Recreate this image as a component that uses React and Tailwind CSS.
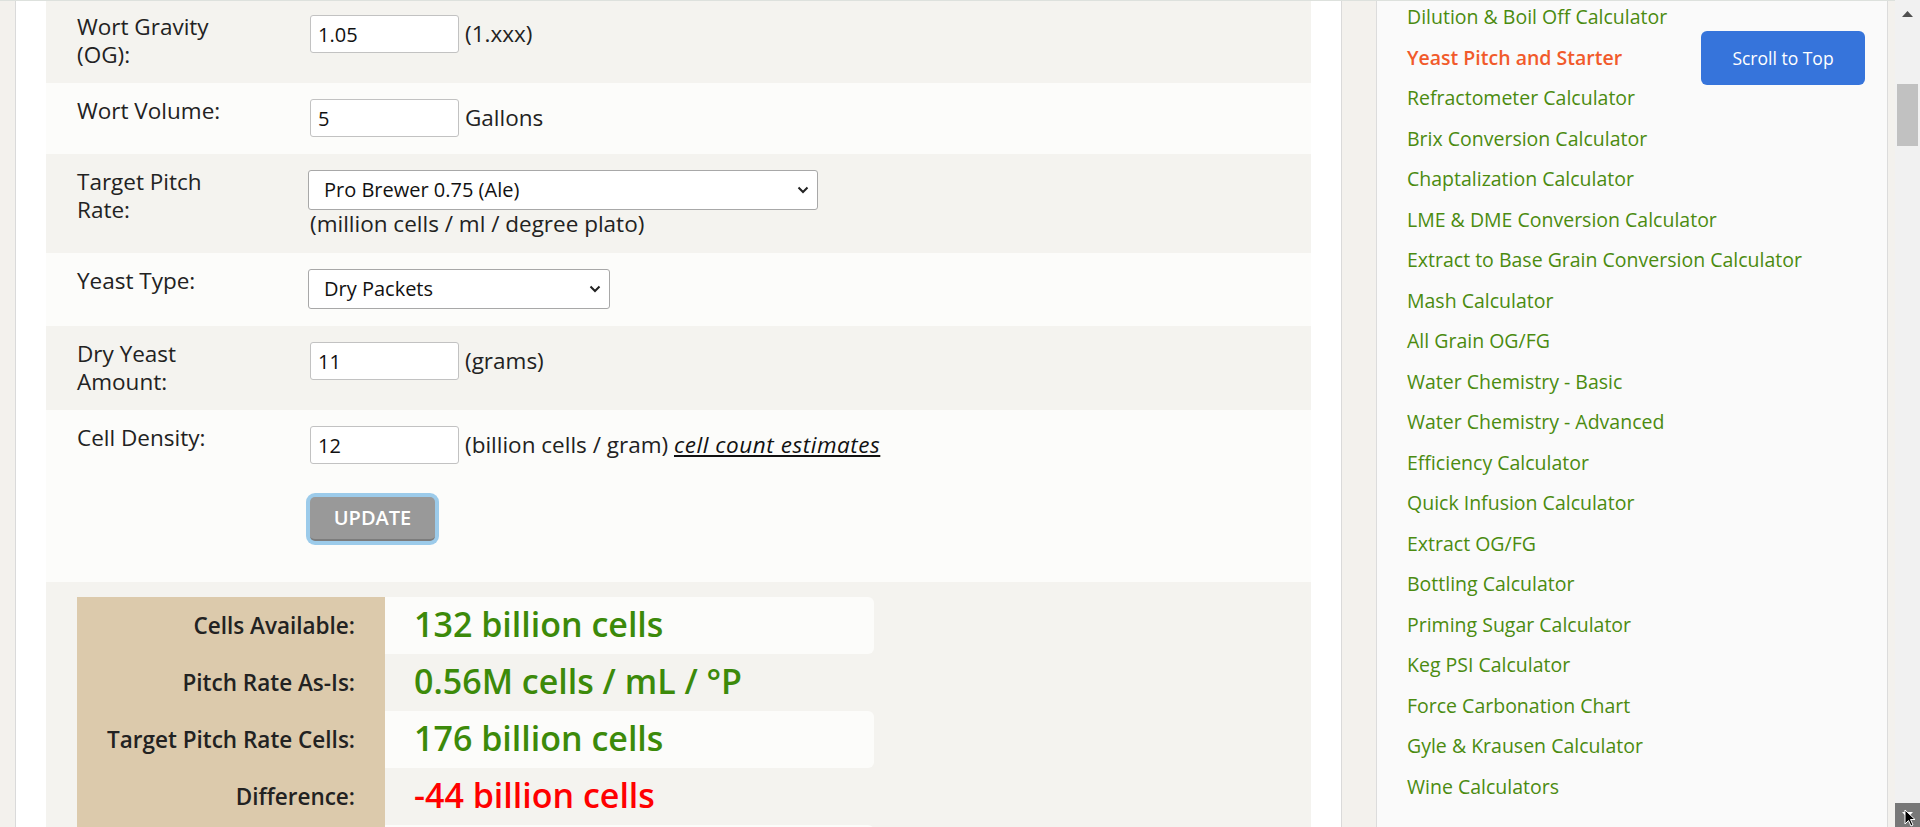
import React from 'react';

// Yeast pitch calculator page, scrolled down a bit.
const sidebarLinks = [
  'Dilution & Boil Off Calculator',
  'Yeast Pitch and Starter',
  'Refractometer Calculator',
  'Brix Conversion Calculator',
  'Chaptalization Calculator',
  'LME & DME Conversion Calculator',
  'Extract to Base Grain Conversion Calculator',
  'Mash Calculator',
  'All Grain OG/FG',
  'Water Chemistry - Basic',
  'Water Chemistry - Advanced',
  'Efficiency Calculator',
  'Quick Infusion Calculator',
  'Extract OG/FG',
  'Bottling Calculator',
  'Priming Sugar Calculator',
  'Keg PSI Calculator',
  'Force Carbonation Chart',
  'Gyle & Krausen Calculator',
  'Wine Calculators',
];

// last row only peeks in at the bottom edge
const results = [
  { label: 'Cells Available:', value: '132 billion cells', light: true },
  { label: 'Pitch Rate As-Is:', value: '0.56M cells / mL / °P' },
  { label: 'Target Pitch Rate Cells:', value: '176 billion cells', light: true },
  { label: 'Difference:', value: '-44 billion cells', bad: true },
  { label: '', value: '', light: true },
];

function Chevron() {
  return (
    <svg width="12" height="8" viewBox="0 0 12 8" className="pointer-events-none absolute right-[9px] top-1/2 -translate-y-1/2">
      <polyline points="1.5,1.5 6,6 10.5,1.5" fill="none" stroke="#222" strokeWidth="2" />
    </svg>
  );
}

function Select({ width, value }) {
  return (
    <div className={`relative -ml-[2px] ${width}`}>
      <select
        defaultValue={value}
        className="h-[40px] w-full appearance-none rounded-[3px] border border-[#a8a8a8] bg-white pl-[15px] text-[20px] text-[#111] font-['Open_Sans',sans-serif] outline-none"
      >
        <option>{value}</option>
      </select>
      <Chevron />
    </div>
  );
}

function Field({ value }) {
  return (
    <input
      defaultValue={value}
      className="h-[38px] w-[149px] rounded-[3px] border border-[#c2c2c2] bg-white px-[7px] text-[20px] text-[#111] font-['Open_Sans',sans-serif] outline-none"
    />
  );
}

function Row({ label, shade, children }) {
  return (
    <div className={`flex px-[31px] pt-4 pb-[17px] ${shade ? 'bg-[#f4f3ef]' : 'bg-[#fcfcfa]'}`}>
      <div className="w-[233px] shrink-0 -mt-[2px] -mb-[3px] text-[22.5px] leading-[28px] text-[#222]">{label}</div>
      <div className="flex-1">{children}</div>
    </div>
  );
}

function Unit({ children }) {
  return <span className="ml-[6px] text-[22.5px] leading-[28px] text-[#222]">{children}</span>;
}

export default function App() {
  return (
    <div className="flex h-[827px] w-[1920px] overflow-hidden bg-[#f3f1ed] font-['Open_Sans',sans-serif]">
      <div className="relative flex w-[1895px] flex-col">
        <div className="h-px w-full bg-[#dde1dd]" />
        <div className="flex min-h-0 flex-1">
          {/* main calculator panel */}
          <div className="ml-[15px] w-[1327px] overflow-hidden border-x border-[#dadada] bg-white px-[30px]">
            <div className="-mt-[2px]">
              <Row label={<>Wort Gravity<br />(OG):</>} shade>
                <div className="flex items-center">
                  <Field value="1.05" />
                  <Unit>(1.xxx)</Unit>
                </div>
              </Row>
              <Row label="Wort Volume:">
                <div className="flex items-center">
                  <Field value="5" />
                  <Unit>Gallons</Unit>
                </div>
              </Row>
              <Row label={<>Target Pitch<br />Rate:</>} shade>
                <Select width="w-[510px]" value="Pro Brewer 0.75 (Ale)" />
                <div className="-mb-[2px] text-[22.5px] leading-[28px] text-[#222]">(million cells / ml / degree plato)</div>
              </Row>
              <Row label="Yeast Type:">
                <Select width="w-[302px]" value="Dry Packets" />
              </Row>
              <Row label={<>Dry Yeast<br />Amount:</>} shade>
                <div className="flex items-center">
                  <Field value="11" />
                  <Unit>(grams)</Unit>
                </div>
              </Row>
              <Row label="Cell Density:">
                <div className="flex items-center">
                  <Field value="12" />
                  <Unit>
                    (billion cells / gram){' '}
                    <a className="italic underline tracking-[0.55px] text-[#111]">cell count estimates</a>
                  </Unit>
                </div>
                <button className="mt-[33px] mb-[24px] h-[44px] w-[125px] rounded-[5px] border-b-2 border-[#7c7c7c] bg-[#999999] text-[20px] font-semibold text-white ring-4 ring-[#9ccbea]">
                  UPDATE
                </button>
              </Row>

              {/* results */}
              <div className="bg-[#f4f3ef] px-[31px] pt-[15px] pb-10">
                {results.map((r, i) => (
                  <div key={i} className="flex h-[57px] w-[797px]">
                    <div className="flex w-[308px] items-center justify-end bg-[#dccaac] pr-[30px] text-[22.5px] font-semibold text-[#222]">
                      {r.label}
                    </div>
                    <div
                      className={`flex flex-1 items-center rounded-r-[6px] pl-[29px] pb-[2px] text-[34px] font-semibold ${r.light ? 'bg-[#fcfcfa]' : ''} ${r.bad ? 'text-[#ff0000]' : 'text-[#3c8a0a]'}`}
                    >
                      {r.value}
                    </div>
                  </div>
                ))}
              </div>
            </div>
          </div>

          {/* sidebar */}
          <div className="ml-[34px] w-[512px] overflow-hidden border-x border-[#dcdcdc] bg-[#fafafa] pl-[30px]">
            <ul className="-mt-[4px]">
              {sidebarLinks.map((l) => (
                <li
                  key={l}
                  className={`py-[5.25px] text-[19.5px] leading-[30px] ${l === 'Yeast Pitch and Starter' ? 'font-semibold text-[#f15a2b]' : 'text-[#4b8b10]'}`}
                >
                  {l}
                </li>
              ))}
            </ul>
          </div>
        </div>

        <button className="absolute left-[1701px] top-[31px] h-[54px] w-[164px] rounded-[6px] bg-[#3674db] text-[17.5px] text-white">
          Scroll to Top
        </button>
      </div>

      {/* scrollbar */}
      <div className="flex w-[25px] flex-col bg-[#f1f1f1]">
        <div className="flex h-[28px] items-center justify-center">
          <svg width="11" height="6" viewBox="0 0 11 6"><polygon points="5.5,0 11,6 0,6" fill="#505050" /></svg>
        </div>
        <div className="mx-[2px] mt-[56px] h-[62px] bg-[#c1c1c1]" />
        <div className="flex-1" />
        <div className="relative flex h-[24px] items-center justify-center bg-[#787878]">
          <svg width="11" height="6" viewBox="0 0 11 6"><polygon points="0,0 11,0 5.5,6" fill="#ffffff" /></svg>
          <svg width="12" height="18" viewBox="0 0 12 18" className="absolute left-[9px] top-[6px]">
            <polygon points="1,1 1,15 4.5,11.5 7,17 9,16 6.5,10.5 11,10.5" fill="#000" stroke="#fff" strokeWidth="1" />
          </svg>
        </div>
      </div>
    </div>
  );
}
